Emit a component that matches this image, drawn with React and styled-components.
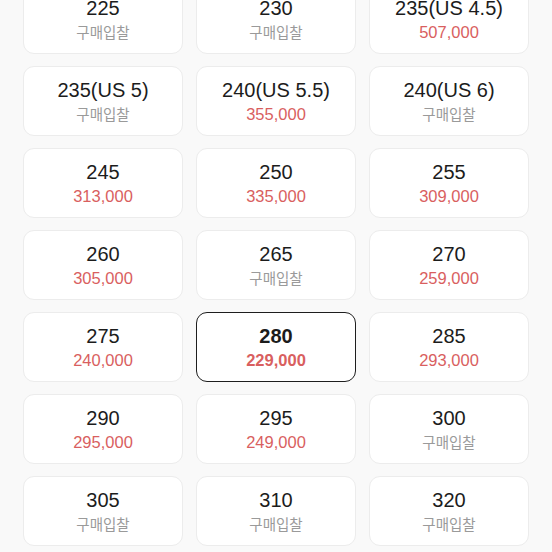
import styled, { createGlobalStyle } from "styled-components";

const GlobalStyle = createGlobalStyle`
  html, body {
    margin: 0;
    padding: 0;
    background: #f9f9f9;
  }
  body {
    font-family: "Liberation Sans", "Noto Sans CJK KR", sans-serif;
  }
`;

const sizes = [
  { size: "225" },
  { size: "230" },
  { size: "235(US 4.5)", price: "507,000" },
  { size: "235(US 5)" },
  { size: "240(US 5.5)", price: "355,000" },
  { size: "240(US 6)" },
  { size: "245", price: "313,000" },
  { size: "250", price: "335,000" },
  { size: "255", price: "309,000" },
  { size: "260", price: "305,000" },
  { size: "265" },
  { size: "270", price: "259,000" },
  { size: "275", price: "240,000" },
  { size: "280", price: "229,000", selected: true },
  { size: "285", price: "293,000" },
  { size: "290", price: "295,000" },
  { size: "295", price: "249,000" },
  { size: "300" },
  { size: "305" },
  { size: "310" },
  { size: "320" },
];

const App = () => {
  return (
    <Page>
      <GlobalStyle />
      <Grid>
        {sizes.map((item) => (
          <SizeCard key={item.size} $selected={item.selected}>
            <SizeLabel $selected={item.selected}>{item.size}</SizeLabel>
            {item.price ? (
              <Price $selected={item.selected}>{item.price}</Price>
            ) : (
              <Bid>구매입찰</Bid>
            )}
          </SizeCard>
        ))}
      </Grid>
    </Page>
  );
};

export default App;

const Page = styled.div`
  width: 552px;
  height: 552px;
  overflow: hidden;
  background: #f9f9f9;
`;

const Grid = styled.div`
  display: grid;
  grid-template-columns: repeat(3, 160px);
  grid-auto-rows: 70px;
  column-gap: 13px;
  row-gap: 12px;
  padding: 0 23px;
  margin-top: -16px;
`;

const SizeCard = styled.div`
  box-sizing: border-box;
  display: flex;
  flex-direction: column;
  align-items: center;
  justify-content: center;
  gap: 1px;
  background: #fff;
  border: ${(p) => (p.$selected ? "1.5px solid #1e1e1e" : "1px solid #ececec")};
  border-radius: 11px;
`;

const SizeLabel = styled.div`
  font-size: 20px;
  line-height: 24px;
  color: #1c1c1c;
  font-weight: ${(p) => (p.$selected ? 700 : 400)};
`;

const Price = styled.div`
  font-size: 16.5px;
  line-height: 22px;
  color: #d95f5f;
  font-weight: ${(p) => (p.$selected ? 700 : 400)};
`;

const Bid = styled.div`
  font-family: "Noto Sans CJK KR", sans-serif;
  font-size: 14.5px;
  line-height: 22px;
  color: #9a9a9a;
`;
